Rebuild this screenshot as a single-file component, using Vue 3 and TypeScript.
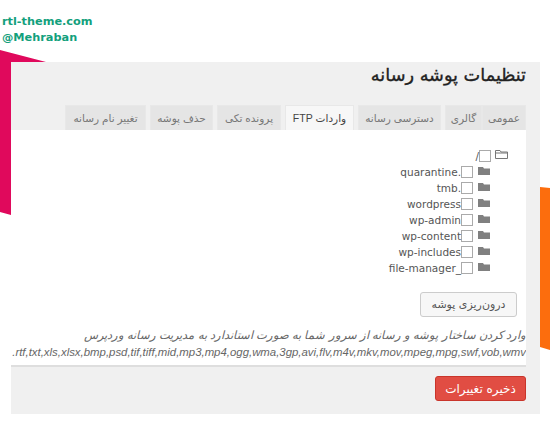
<script setup lang="ts">
const tabs = [
  { label: 'عمومی', w: 44 },
  { label: 'گالری', w: 37 },
  { label: 'دسترسی رسانه', w: 83 },
  { label: 'واردات FTP', w: 69, active: true },
  { label: 'پرونده تکی', w: 64 },
  { label: 'حذف پوشه', w: 63 },
  { label: 'تغییر نام رسانه', w: 81 },
]
const folders = ['.quarantine', '.tmb', 'wordpress', 'wp-admin', 'wp-content', 'wp-includes', '_file-manager']
</script>

<template>
  <div class="page" dir="rtl">
    <div class="brand" dir="ltr">
      <div>rtl-theme.com</div>
      <div>@Mehraban</div>
    </div>
    <div class="pink"></div>
    <div class="orange"></div>
    <main class="panel">
      <h1 class="title">تنظیمات پوشه رسانه</h1>
      <nav class="tabs">
        <a
          v-for="t in tabs"
          :key="t.label"
          class="tab"
          :class="{ active: t.active }"
          :style="{ width: t.w + 'px' }"
        >{{ t.label }}</a>
      </nav>
      <section class="card">
        <div class="tree">
          <div class="row root">
            <svg class="ico" viewBox="0 0 13 9" width="13" height="9">
              <path d="M.5 8.500V.5h4.500l1 1.500h6.500v6.500z M.5 3h12" fill="none" stroke="#777" stroke-width="1" />
            </svg>
            <span class="check"></span>
            <span class="name">/</span>
          </div>
          <div class="children">
            <div v-for="f in folders" :key="f" class="row">
              <svg class="ico" viewBox="0 0 12 8" width="12" height="8">
                <path d="M0 8V0h5l1 1.500h6V8z" fill="#808080" />
              </svg>
              <span class="check"></span>
              <span class="name">{{ f }}</span>
            </div>
          </div>
        </div>
        <button class="import">درون‌ریزی پوشه</button>
        <p class="desc">وارد کردن ساختار پوشه و رسانه از سرور شما به صورت استاندارد به مدیریت رسانه وردپرس</p>
        <p class="types" dir="ltr">.rtf,txt,xls,xlsx,bmp,psd,tif,tiff,mid,mp3,mp4,ogg,wma,3gp,avi,flv,m4v,mkv,mov,mpeg,mpg,swf,vob,wmv</p>
      </section>
      <button class="save">ذخیره تغییرات</button>
    </main>
  </div>
</template>

<style>
html, body { margin: 0; background: #fff; }
</style>

<style scoped>
.page {
  position: relative;
  width: 550px;
  height: 425px;
  overflow: hidden;
  box-sizing: border-box;
  padding: 62px 10px 11px 11px;
  font-family: "Liberation Sans", "DejaVu Sans", sans-serif;
  color: #555;
}
.brand {
  position: absolute;
  left: 2px;
  top: 14px;
  font-family: "DejaVu Sans", sans-serif;
  font-weight: 700;
  font-size: 11.300px;
  line-height: 16px;
  color: #12a07c;
}
.pink {
  position: absolute;
  left: 0;
  top: 50px;
  width: 46px;
  height: 165px;
  background: #e0095c;
  clip-path: polygon(0 0, 100% 12px, 11px 12px, 11px 100%, 0 162px);
}
.orange {
  position: absolute;
  right: 0;
  top: 187px;
  width: 10px;
  height: 163px;
  background: #fc6d0d;
  clip-path: polygon(0 0, 100% 1px, 100% 100%, 0 160px);
}
.panel {
  height: 352px;
  background: #f0f0f0;
  box-sizing: border-box;
  padding: 0 14px 0 0;
  display: flex;
  flex-direction: column;
}
.title {
  margin: 0;
  height: 43px;
  font-family: "DejaVu Sans", sans-serif;
  font-size: 17.700px;
  line-height: 26px;
  font-weight: 400;
  -webkit-text-stroke: 0.35px #222;
  color: #222;
}
.tabs {
  display: flex;
  height: 25px;
  font-size: 10.500px;
}
.tab {
  flex: none;
  box-sizing: border-box;
  height: 26px;
  background: #e5e5e5;
  border: 1px solid #e8e8e8;
  margin-left: 4px;
  text-align: center;
  line-height: 24px;
  color: #777;
  white-space: nowrap;
}
.tab:first-child { margin-left: 0; }
.tab.active {
  background: #f7f7f7;
  border-color: #e8e8e8;
  border-bottom-color: #f7f7f7;
  color: #444;
}
.card {
  background: #fff;
  height: 237px;
  box-sizing: border-box;
  padding: 18px 0 0 0;
  border-bottom: 2px solid #dedede;
  overflow: hidden;
}
.tree {
  padding-right: 18px;
  height: 144px;
}
.children {
  padding-right: 18px;
}
.row {
  display: flex;
  align-items: center;
  height: 16px;
  font-size: 10.500px;
  font-family: "DejaVu Sans", sans-serif;
  color: #555;
}
.row .ico { margin-left: 5px; margin-top: -3px; flex: none; }
.root .ico { margin-left: 4px; margin-top: -4px; }
.check {
  flex: none;
  width: 12px;
  height: 12px;
  border: 1px solid #aaa;
  box-sizing: border-box;
  background: #fff;
}
.name { white-space: nowrap; }
.import {
  display: block;
  margin-right: 9px;
  margin-left: auto;
  width: 97px;
  height: 25px;
  background: #f7f7f7;
  border: 1px solid #ccc;
  border-radius: 3px;
  font-family: "DejaVu Sans", sans-serif;
  font-size: 11px;
  color: #555;
  padding: 0;
}
.desc {
  margin: 10px 0 0;
  font-size: 11.500px;
  line-height: 17px;
  font-style: italic;
  color: #666;
  white-space: nowrap;
}
.types {
  margin: 0;
  font-size: 11.400px;
  line-height: 17px;
  font-style: italic;
  color: #666;
  text-align: right;
  white-space: nowrap;
}
.save {
  align-self: flex-start;
  margin-top: 9px;
  width: 91px;
  height: 25px;
  background: #e14d43;
  border: 1px solid #c9352b;
  border-radius: 3px;
  font-family: "DejaVu Sans", sans-serif;
  font-size: 12px;
  color: #fff;
  padding: 0;
}
</style>
